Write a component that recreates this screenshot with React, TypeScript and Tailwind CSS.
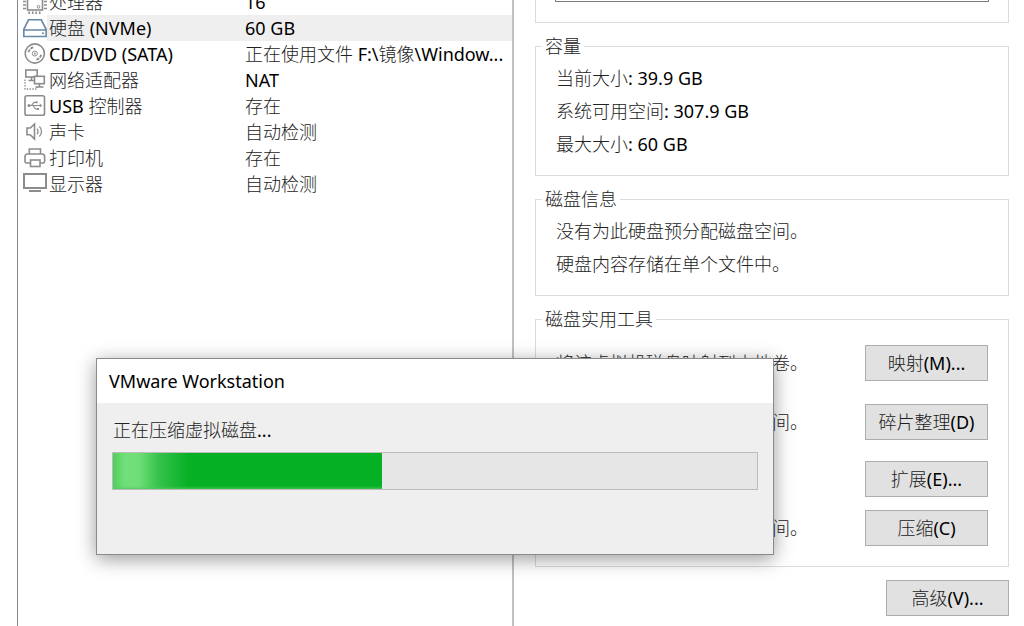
import React from 'react';

interface Device {
  id: string;
  name: string;
  summary: string;
  icon: React.ReactNode;
}

// Chinese runs are drawn lighter than the latin ones, like the native dialog font pair
const Label: React.FC<{ text: string }> = ({ text }) => (
  <>
    {text.split(/([\u3000-\u9fff]+)/).filter(Boolean).map((part, i) =>
      /[\u3000-\u9fff]/.test(part) ? (
        <span key={i} className="font-light text-[#222222]">{part}</span>
      ) : (
        <span key={i} className="whitespace-pre text-black">{part}</span>
      )
    )}
  </>
);

const DeviceIcon: React.FC<{ children: React.ReactNode }> = ({ children }) => (
  <svg viewBox="0 0 24 26" width="24" height="26" fill="none" stroke="#8c8c8c" strokeWidth="1.6" className="block" aria-hidden="true">
    {children}
  </svg>
);

const devices: Device[] = [
  {
    id: 'cpu',
    name: '处理器',
    summary: '16',
    icon: (
      <DeviceIcon>
        <rect x="4.5" y="6" width="15" height="15" />
        <circle cx="15.5" cy="17.8" r="1.3" strokeWidth="1" />
        <path d="M0 9h3M0 12.5h3M0 16h3M0 19.5h3M21 9h3M21 12.5h3M21 16h3M21 19.5h3" />
        <path d="M6.2 22.5v2.5M9.7 22.5v2.5M13.2 22.5v2.5M16.7 22.5v2.5" />
      </DeviceIcon>
    ),
  },
  {
    id: 'disk',
    name: '硬盘 (NVMe)',
    summary: '60 GB',
    icon: (
      <DeviceIcon>
        <path d="M5.5 4.8h12.8l4.8 9.5v7.2H.8v-7.2zM.8 15h22.4" stroke="#6788a6" />
        <circle cx="20" cy="18.2" r="1" fill="#6788a6" stroke="none" />
      </DeviceIcon>
    ),
  },
  {
    id: 'cd',
    name: 'CD/DVD (SATA)',
    summary: '正在使用文件 F:\\镜像\\Window...',
    icon: (
      <DeviceIcon>
        <circle cx="11.8" cy="12.5" r="9.6" />
        <circle cx="11.8" cy="12.5" r="2.5" strokeWidth="1" />
        <circle cx="11.8" cy="12.5" r="0.9" fill="#8c8c8c" stroke="none" />
        <path d="M5.5 11.2a6.4 6.4 0 0 1 4.8-4.9M18.1 13.8a6.4 6.4 0 0 1-4.8 4.9" strokeWidth="1.8" strokeDasharray="3 1" />
      </DeviceIcon>
    ),
  },
  {
    id: 'net',
    name: '网络适配器',
    summary: 'NAT',
    icon: (
      <DeviceIcon>
        <path d="M2 12.5v9.5h12v-3" strokeWidth="1.3" strokeDasharray="1.4 1.4" />
        <rect x="2.8" y="3" width="11.4" height="7" />
        <path d="M8.5 10v3M5.5 13.5h6" />
        <rect x="11.5" y="9.3" width="9.8" height="7.4" fill="#fff" />
        <path d="M16.4 17v3M12.5 20h8" />
      </DeviceIcon>
    ),
  },
  {
    id: 'usb',
    name: 'USB 控制器',
    summary: '存在',
    icon: (
      <DeviceIcon>
        <rect x="2" y="2.7" width="19.5" height="19.5" rx="1.8" />
        <path d="M6 12.5h11.5M8.5 12.5l2.5-3.2h2.5M10 12.5l2.5 3.5h2.5" strokeWidth="1.2" />
        <circle cx="6" cy="12.5" r="1.5" fill="#8c8c8c" stroke="none" />
        <circle cx="13.7" cy="9.3" r="1.1" fill="#8c8c8c" stroke="none" />
        <path d="M16.8 10.6l2.4 1.9-2.4 1.9zM14 15h2v2h-2z" fill="#8c8c8c" stroke="none" />
      </DeviceIcon>
    ),
  },
  {
    id: 'sound',
    name: '声卡',
    summary: '自动检测',
    icon: (
      <DeviceIcon>
        <path d="M4 9h3.2l4.3-4v15l-4.3-4.2H4z" />
        <path d="M14 9.8c1.4 1.4 1.4 4 0 5.4M16.4 7.6c2.8 2.6 2.8 7.2 0 9.8" strokeWidth="1.3" />
      </DeviceIcon>
    ),
  },
  {
    id: 'printer',
    name: '打印机',
    summary: '存在',
    icon: (
      <DeviceIcon>
        <path d="M6.3 9V4h11.2v5" />
        <path d="M7 18H3.5A1.5 1.5 0 0 1 2 16.5v-5A2.5 2.5 0 0 1 4.5 9h14.6a2.5 2.5 0 0 1 2.5 2.5v5a1.5 1.5 0 0 1-1.5 1.5H17" />
        <rect x="7.5" y="15" width="9.5" height="6.5" />
      </DeviceIcon>
    ),
  },
  {
    id: 'display',
    name: '显示器',
    summary: '自动检测',
    icon: (
      <DeviceIcon>
        <rect x="1" y="3" width="22" height="14" strokeWidth="2" />
        <path d="M6 20h12" strokeWidth="2" />
      </DeviceIcon>
    ),
  },
];

const utilities = [
  { text: '将该虚拟机磁盘映射到本地卷。', button: '映射(M)...', row: 'mt-[14px]' },
  { text: '整理文件碎片并整合可用空间。', button: '碎片整理(D)', row: 'mt-[23px]' },
  { text: '扩展磁盘容量。', button: '扩展(E)...', row: 'mt-[21px]' },
  { text: '压缩磁盘以回收未使用的空间。', button: '压缩(C)', row: 'mt-[13px]' },
];

const Group: React.FC<{ title: string; children: React.ReactNode }> = ({ title, children }) => (
  <fieldset className="min-w-0 border border-[#dcdcdc] px-5">
    <legend className="-ml-[14px] px-[3px] leading-6"><Label text={title} /></legend>
    {children}
  </fieldset>
);

const PushButton: React.FC<{ text: string }> = ({ text }) => (
  <button type="button" className="h-9 w-[123px] shrink-0 border border-[#adadad] bg-[#e1e1e1] leading-6 whitespace-nowrap hover:border-[#0078d7] hover:bg-[#e5f1fb]">
    <Label text={text} />
  </button>
);

const App: React.FC = () => {
  const selected = 'disk';
  const progress = 41.8;

  return (
    <div className="relative h-screen overflow-hidden bg-white font-['Noto_Sans','Noto_Sans_CJK_SC',sans-serif] text-[18px]">
      <div className="grid h-full grid-cols-[497fr_474fr] gap-[21px] pr-[15px] pl-[17px]">
        {/* Device list */}
        <div className="min-w-0 overflow-hidden border-r-2 border-l border-r-[#c0c0c4] border-l-[#828790]">
          <table className="-mt-[11px] w-full table-fixed border-collapse">
            <colgroup>
              <col className="w-[29px]" />
              <col className="w-[198px]" />
              <col />
            </colgroup>
            <tbody>
              {devices.map(device => (
                <tr key={device.id} className="group h-[26px] leading-[26px]" aria-selected={device.id === selected}>
                  <td className="p-0 pl-[5px]">{device.icon}</td>
                  <td className="overflow-hidden p-0 pl-[2px] whitespace-nowrap group-aria-selected:bg-[#efefef]"><Label text={device.name} /></td>
                  <td className="overflow-hidden p-0 whitespace-nowrap group-aria-selected:bg-[#efefef]"><Label text={device.summary} /></td>
                </tr>
              ))}
            </tbody>
          </table>
        </div>

        {/* Disk settings */}
        <div className="-mt-[60px] min-w-0">
          <div className="flex flex-col gap-[11px]">
            <div className="border border-[#dcdcdc] px-[19px] pt-[25px] pb-5">
              <input readOnly aria-label="磁盘文件" className="block h-[36px] w-full border border-[#7a7a7a] bg-white outline-none" />
            </div>

            <Group title="容量">
              <div className="pt-1 pb-[14px] leading-[33px]">
                <p><Label text="当前大小: 39.9 GB" /></p>
                <p><Label text="系统可用空间: 307.9 GB" /></p>
                <p><Label text="最大大小: 60 GB" /></p>
              </div>
            </Group>

            <Group title="磁盘信息">
              <div className="pt-1 pb-[14px] leading-[33px]">
                <p><Label text="没有为此硬盘预分配磁盘空间。" /></p>
                <p><Label text="硬盘内容存储在单个文件中。" /></p>
              </div>
            </Group>

            <Group title="磁盘实用工具">
              <div className="flow-root pb-5">
                {utilities.map(item => (
                  <div key={item.button} className={`flex items-center justify-between ${item.row}`}>
                    <p className="leading-6 whitespace-nowrap"><Label text={item.text} /></p>
                    <PushButton text={item.button} />
                  </div>
                ))}
              </div>
            </Group>
          </div>
          <div className="mt-[13px] flex justify-end">
            <PushButton text="高级(V)..." />
          </div>
        </div>
      </div>

      {/* Progress dialog */}
      <div role="dialog" aria-labelledby="dialogTitle" className="absolute top-[358px] left-[96px] w-[678px] border border-[#8a8a8a] bg-[#efefef] shadow-[0_4px_18px_rgba(0,0,0,0.4)]">
        <h1 id="dialogTitle" className="bg-white pl-3 leading-[44px] text-black">VMware Workstation</h1>
        <div className="px-[15px] pt-[15px] pb-16">
          <p className="pl-px leading-6"><Label text="正在压缩虚拟磁盘..." /></p>
          <div role="progressbar" aria-label="正在压缩虚拟磁盘" aria-valuenow={progress} className="mt-[10px] h-[38px] border border-[#bcbcbc] bg-[#e6e6e6]">
            <div
              className="h-full bg-[linear-gradient(to_right,#4fcf5c_0px,#72e07a_12px,#6fde77_26px,#35c24b_46px,#06b025_76px)] shadow-[inset_0_-3px_3px_-2px_#4fcb5d]"
              style={{ width: `${progress}%` }}
            />
          </div>
        </div>
      </div>
    </div>
  );
};

export default App;
